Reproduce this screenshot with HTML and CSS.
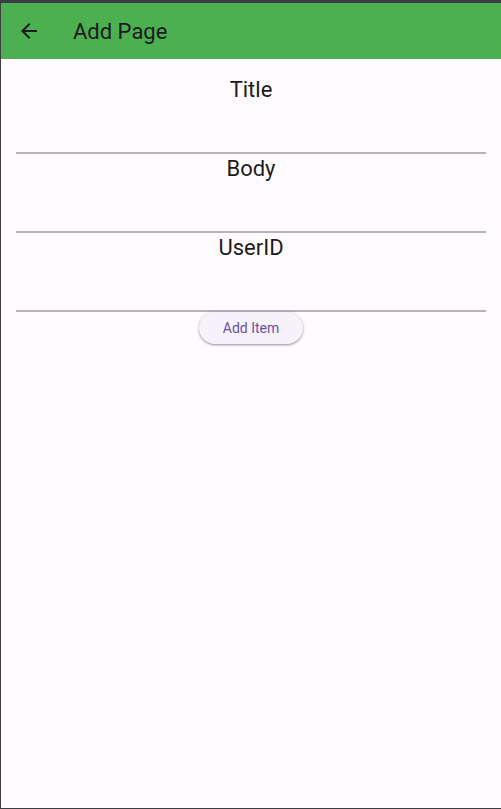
FILE: index.html
```html
<!DOCTYPE html>
<html>
<head>
<meta charset="utf-8">
<link rel="stylesheet" href="styles.css">
</head>
<body>
<div class="frame">
  <header class="appbar">
    <button class="back" aria-label="Back">
      <svg width="24" height="24" viewBox="0 0 24 24"><path d="M20 11H7.83l5.59-5.59L12 4l-8 8 8 8 1.41-1.41L7.83 13H20v-2z" fill="#1d1b20"/></svg>
    </button>
    <h1 class="title">Add Page</h1>
  </header>
  <main class="content">
    <div class="field"><span class="label">Title</span></div>
    <div class="field"><span class="label">Body</span></div>
    <div class="field"><span class="label">UserID</span></div>
    <button class="add">Add Item</button>
  </main>
</div>
</body>
</html>
```

FILE: styles.css
```css
* { box-sizing: border-box; }
html, body { margin: 0; padding: 0; height: 100%; }
body { font-family: Roboto, "Noto Sans", sans-serif; background: #3a3d44; }
.frame {
  height: 809px;
  border-top: 3px solid #3a3d44;
  border-left: 1px solid #3a3d44;
  border-bottom: 1px solid #3a3d44;
  background: #fffbfe;
  display: flex;
  flex-direction: column;
}
.appbar {
  height: 56px;
  background: #4caf50;
  display: flex;
  align-items: center;
  padding-left: 16px;
}
.back {
  width: 24px; height: 24px; padding: 0; border: 0; background: none;
  display: flex; align-items: center; justify-content: center;
}
.title {
  margin: 0 0 0 32px;
  font-size: 22px;
  font-weight: 400;
  color: #1d1b20;
}
.content {
  padding: 16px 15px 0;
  display: flex;
  flex-direction: column;
  align-items: center;
}
.field {
  width: 100%;
  height: 79px;
  border-bottom: 2px solid #b6b2b8;
  padding-top: 3px;
  text-align: center;
}
.label {
  font-size: 22px;
  line-height: 24px;
  color: #1d1b20;
}
.add {
  margin-top: 0;
  height: 32px;
  padding: 0 24px;
  border: 0;
  border-radius: 16px;
  background: #f7f2fa;
  color: #6750a4;
  font-family: Roboto, sans-serif;
  font-size: 14px;
  box-shadow: 0 1px 2px rgba(0,0,0,0.3), 0 1px 3px 1px rgba(0,0,0,0.1);
}
```
